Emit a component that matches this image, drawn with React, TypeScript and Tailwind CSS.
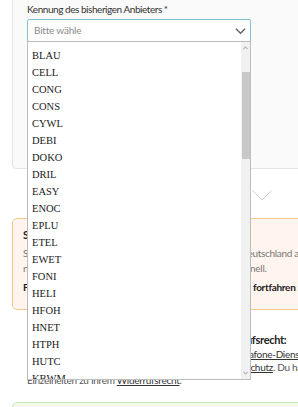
import React from "react";

const anbieter = [
  "AUGS", "BLAU", "CELL", "CONG", "CONS", "CYWL", "DEBI", "DOKO", "DRIL", "EASY",
  "ENOC", "EPLU", "ETEL", "EWET", "FONI", "HELI", "HFOH", "HNET", "HTPH", "HUTC", "KBWM",
];

function Chevron({ className, up }: { className?: string; up?: boolean }) {
  return (
    <svg viewBox="0 0 12 8" className={className} fill="none" stroke="currentColor">
      <path d={up ? "M1 6.5 6 1.5 11 6.5" : "M1 1.5 6 6.5 11 1.5"} strokeWidth="1.6" />
    </svg>
  );
}

function DropdownList() {
  return (
    <div className="absolute left-[27px] top-[41px] w-[224px] h-[339px] bg-white border border-[#bdbdbd] overflow-hidden flex">
      <ul className="flex-1 mt-[-12px] pl-[4px] font-['Liberation_Serif',serif] text-[10.5px] text-[#1a1a1a]">
        {anbieter.map((a) => (
          <li key={a} className="h-[17px] leading-[17px]">
            {a}
          </li>
        ))}
      </ul>
      <div className="w-[9px] bg-[#f1f1f1] flex flex-col items-center">
        <div className="h-[12px] flex items-center">
          <Chevron up className="w-[5px] h-[4px] text-[#606060]" />
        </div>
        <div className="mt-[18px] w-[8px] h-[87px] bg-[#c8c8c8]" />
        <div className="flex-1" />
        <div className="h-[12px] flex items-center">
          <Chevron className="w-[5px] h-[4px] text-[#606060]" />
        </div>
      </div>
    </div>
  );
}

export default function App() {
  return (
    <div className="relative w-[298px] h-[407px] overflow-hidden bg-white font-['Lato',sans-serif] text-[#333]">
      <div className="w-[500px] ml-[12px]">
        <div className="mt-[-8px] h-[177px] rounded-[4px] border border-[#e4e4e4] bg-[#fafafa] pl-[14px] pt-[9px]">
          <label className="block text-[10px] tracking-[-0.45px] leading-[14px] text-[#333]">
            Kennung des bisherigen Anbieters *
          </label>
          <div className="mt-[3px] w-[224px] h-[23px] rounded-[2px] border border-[#7cc6cf] bg-white flex items-center justify-between pl-[6px] pr-[4px]">
            <span className="text-[10px] tracking-[-0.2px] text-[#8a8a8a]">Bitte wähle</span>
            <Chevron className="w-[11px] h-[8px] text-[#666]" />
          </div>
        </div>

        <div className="flex justify-center pt-[21px] pb-[17px]">
          <svg viewBox="0 0 20 11" className="w-[20px] h-[11px]" fill="none" stroke="#cfcfcf">
            <path d="M0.5 0.5 10 10 19.5 0.5" strokeWidth="1" />
          </svg>
        </div>

        <div className="h-[92px] rounded-[5px] border border-[#f3c98a] bg-[#fff5ee] pl-[10px] pt-[8px] text-[10px] tracking-[-0.3px]">
          <p className="font-bold text-[11px] text-[#222] leading-[15px]">Schon gewusst?</p>
          <p className="mt-[4px] text-[#777] leading-[15px] whitespace-nowrap">
            <span className="[word-spacing:0.9px]">Sie können Ihre Rufnummer kostenlos zu Vodafone </span>
            Deutschland als neuen Anbieter
          </p>
          <p className="text-[#777] leading-[15px] whitespace-nowrap">
            <span className="[word-spacing:-1.2px]">nehmen. Das geht nun ganz einfach, bequem und sehr </span>
            schnell.
          </p>
          <p className="mt-[4px] font-bold text-[#222] leading-[15px] whitespace-nowrap">
            Falls Du Deine Rufnummer mitnehmen möchtest, dann fortfahren :
          </p>
        </div>

        <div className="pl-[15px] pt-[21px] text-[10px] tracking-[-0.3px] text-[#555]">
          <p className="font-bold text-[11px] text-[#222] leading-[17px] whitespace-nowrap">
            <span className="[word-spacing:0.1px]">Informationen und Hinweise zu Deinem </span>
            Widerrufsrecht:
          </p>
          <p className="leading-[13px] whitespace-nowrap">
            <span className="[word-spacing:0.8px]">Hier findest Du Informationen zu Deinem neuen </span>
            <span className="underline text-[#333]">Vodafone-Dienst</span>
          </p>
          <p className="leading-[13px] whitespace-nowrap">
            <span className="[word-spacing:1.1px]">die Leistungsbeschreibung und Hinweise zum </span>
            <span className="underline text-[#333]">Datenschutz</span>. Du hast ein Recht auf
          </p>
          <p className="leading-[13px] whitespace-nowrap">
            Einzelheiten zu Ihrem <span className="underline text-[#333]">Widerrufsrecht</span>.
          </p>
        </div>

        <div className="mt-[15px] h-[40px] rounded-[5px] border border-[#c9e3b5] bg-[#f1f9ec]" />
      </div>

      <DropdownList />
    </div>
  );
}
